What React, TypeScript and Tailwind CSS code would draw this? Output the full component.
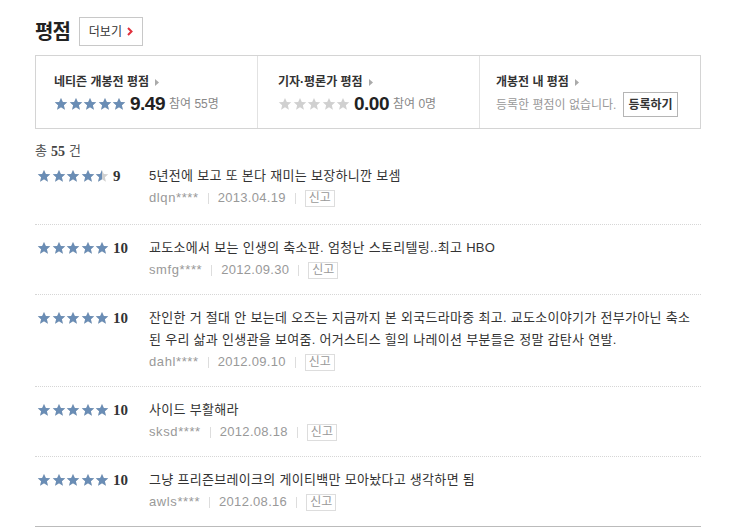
import React from "react";

const FONT = { fontFamily: '"Liberation Sans", "Noto Sans CJK KR", sans-serif' };
const SERIF = { fontFamily: '"Liberation Serif", "Noto Sans CJK KR", serif' };

const Star = ({ fill, id }: { fill: number; id: string }) => (
  <svg width="14" height="14" viewBox="0 0 24 24" className="shrink-0">
    <defs>
      <clipPath id={id}>
        <rect x="0" y="0" width={24 * fill} height="24" />
      </clipPath>
    </defs>
    <path
      d="M12 1.5l3.1 7.1 7.6.6-5.8 5 1.8 7.5L12 17.7l-6.7 4 1.8-7.5-5.8-5 7.6-.6z"
      fill="#d0d0d0"
    />
    <path
      d="M12 1.5l3.1 7.1 7.6.6-5.8 5 1.8 7.5L12 17.7l-6.7 4 1.8-7.5-5.8-5 7.6-.6z"
      fill="#6a8db5"
      clipPath={`url(#${id})`}
    />
  </svg>
);

const Stars = ({ score, uid }: { score: number; uid: string }) => {
  const v = score / 2;
  return (
    <div className="flex items-center gap-[0.5px]">
      {[0, 1, 2, 3, 4].map((i) => (
        <Star key={i} id={`${uid}-${i}`} fill={Math.max(0, Math.min(1, v - i))} />
      ))}
    </div>
  );
};

const Arrow = () => (
  <svg width="5" height="7" viewBox="0 0 5 7" className="ml-[6px] inline-block">
    <path d="M0 0l4 3.5L0 7z" fill="#aaa" />
  </svg>
);

const reviews = [
  { score: 9, lines: ["5년전에 보고 또 본다 재미는 보장하니깐 보셈"], user: "dlqn****", date: "2013.04.19" },
  { score: 10, lines: ["교도소에서 보는 인생의 축소판. 엄청난 스토리텔링..최고 HBO"], user: "smfg****", date: "2012.09.30" },
  {
    score: 10,
    lines: [
      "잔인한 거 절대 안 보는데 오즈는 지금까지 본 외국드라마중 최고. 교도소이야기가 전부가아닌 축소",
      "된 우리 삶과 인생관을 보여줌. 어거스티스 힐의 나레이션 부분들은 정말 감탄사 연발.",
    ],
    user: "dahl****",
    date: "2012.09.10",
  },
  { score: 10, lines: ["사이드 부활해라"], user: "sksd****", date: "2012.08.18" },
  { score: 10, lines: ["그냥 프리즌브레이크의 게이티백만 모아놨다고 생각하면 됨"], user: "awls****", date: "2012.08.16" },
];

export default function App() {
  return (
    <div className="w-[740px] h-[530px] bg-white overflow-hidden pl-[35px] pt-[17px]" style={FONT}>
      <div className="w-[666px]">
        <div className="flex items-center gap-[9px] h-[29px]">
          <h2 className="text-[20px] font-bold text-[#222] tracking-[-1px]">평점</h2>
          <button className="h-[29px] px-[9px] border border-[#c8c8c8] flex items-center gap-[5px] text-[12px] text-[#333] bg-white">
            더보기
            <svg width="6" height="9" viewBox="0 0 6 9">
              <path d="M1 1l3.5 3.5L1 8" stroke="#e0303c" strokeWidth="2" fill="none" />
            </svg>
          </button>
        </div>

        <div className="mt-[9px] border border-[#d4d4d4] h-[74px] grid grid-cols-[222px_222px_1fr]">
          <div className="border-r border-[#e2e2e2] pl-[18px] pt-[18px]">
            <div className="text-[12px] font-bold text-[#333] flex items-center h-[16px]">
              네티즌 개봉전 평점<Arrow />
            </div>
            <div className="flex items-center mt-[3px] h-[22px]">
              <Stars score={10} uid="a" />
              <span className="ml-[4px] text-[19px] font-bold text-[#222] tracking-[-0.5px]">9.49</span>
              <span className="ml-[4px] text-[12px] text-[#888]">참여 55명</span>
            </div>
          </div>
          <div className="border-r border-[#e2e2e2] pl-[20px] pt-[18px]">
            <div className="text-[12px] font-bold text-[#333] flex items-center h-[16px]">
              기자·평론가 평점<Arrow />
            </div>
            <div className="flex items-center mt-[3px] h-[22px]">
              <Stars score={0} uid="b" />
              <span className="ml-[4px] text-[19px] font-bold text-[#222] tracking-[-0.5px]">0.00</span>
              <span className="ml-[4px] text-[12px] text-[#888]">참여 0명</span>
            </div>
          </div>
          <div className="pl-[16px] pt-[18px]">
            <div className="text-[12px] font-bold text-[#333] flex items-center h-[16px]">
              개봉전 내 평점<Arrow />
            </div>
            <div className="flex items-center mt-[2px]">
              <span className="text-[12px] text-[#999]">등록한 평점이 없습니다.</span>
              <button className="ml-[7px] h-[25px] px-[4px] border border-[#b5b5b5] text-[12px] font-bold text-[#333] bg-white">
                등록하기
              </button>
            </div>
          </div>
        </div>

        <div className="mt-[13px] text-[13px] text-[#555] h-[18px] flex items-center">
          총 <b className="mx-[4px] text-[14px] text-[#444]" style={SERIF}>55</b> 건
        </div>

        <div className="border-b border-[#bbb]">
          {reviews.map((r, i) => (
            <div
              key={i}
              className={`flex ${i === 0 ? "pt-[5px] pb-[15px]" : "pt-[12px] pb-[13px]"} ${
                i < reviews.length - 1 ? "border-b border-dotted border-[#d6d6d6]" : ""
              }`}
            >
              <div className="w-[114px] flex items-center h-[22px] pl-[2px]">
                <Stars score={r.score} uid={`r${i}`} />
                <span className="ml-[4px] text-[15px] font-bold text-[#333]" style={SERIF}>
                  {r.score}
                </span>
              </div>
              <div className="flex-1">
                {r.lines.map((l, j) => (
                  <p key={j} className="text-[13px] text-[#333] leading-[22px] tracking-[0.3px]">
                    {l}
                  </p>
                ))}
                <div className="flex items-center h-[22px] text-[13px] text-[#999]">
                  <span className="tracking-[0.6px]">{r.user}</span>
                  <span className="mx-[9px] w-px h-[11px] bg-[#ddd]" />
                  <span className="tracking-[0.3px]">{r.date}</span>
                  <span className="mx-[9px] w-px h-[11px] bg-[#ddd]" />
                  <span className="border border-[#ddd] px-[3px] h-[17px] leading-[15px] text-[12px] text-[#999]">
                    신고
                  </span>
                </div>
              </div>
            </div>
          ))}
        </div>
      </div>
    </div>
  );
}
